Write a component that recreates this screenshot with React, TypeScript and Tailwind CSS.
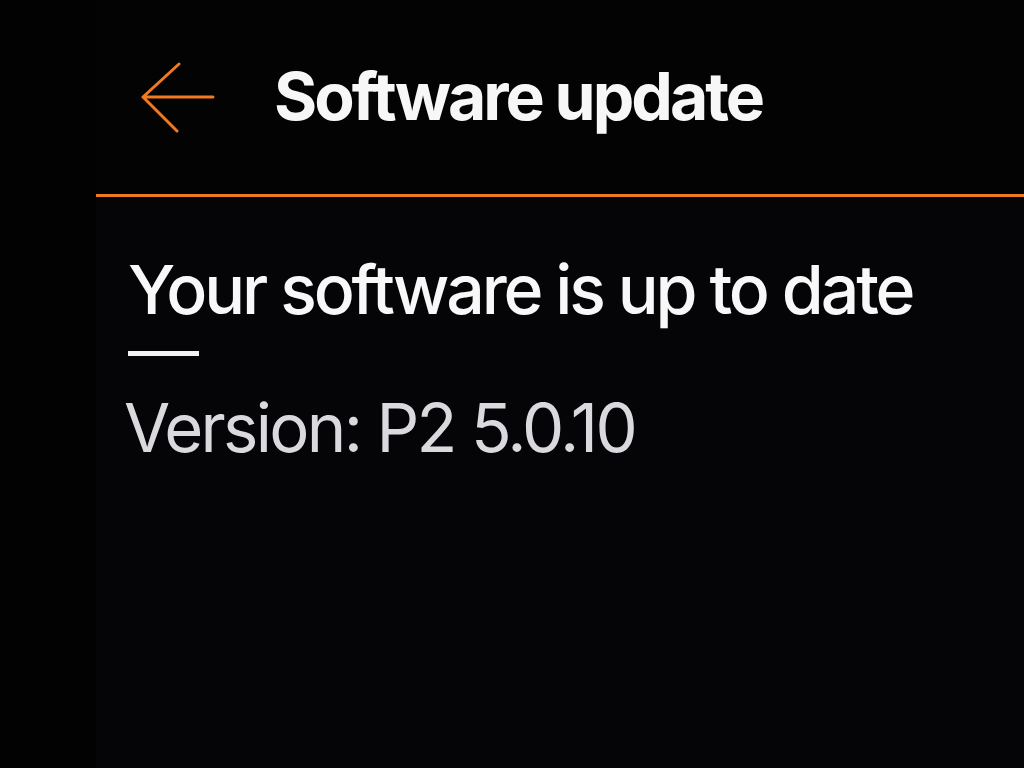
import React from "react";

export default function App() {
  return (
    <div
      className="w-[1024px] h-[768px] bg-[#020202] flex overflow-hidden"
      style={{ fontFamily: "Inter, 'Noto Sans', sans-serif" }}
    >
      <div className="w-[96px] shrink-0" />
      <div className="flex-1 bg-[#050507] flex flex-col">
        <div className="h-[194px] flex items-center bg-[#030303]">
          <div className="w-[45px] shrink-0" />
          <svg width="74" height="72" viewBox="0 0 74 72" className="shrink-0 mt-[2px]">
            <path
              d="M72 35 H2 M38 2 L2 35 L36 69"
              fill="none"
              stroke="#f27a1e"
              strokeWidth="3"
              strokeLinecap="round"
              strokeLinejoin="round"
            />
          </svg>
          <div className="w-[59px] shrink-0" />
          <h1 className="text-[66px] font-bold text-[#f7f7f7] tracking-[-0.045em] leading-none pb-[2px]">
            Software update
          </h1>
        </div>
        <div className="h-[3px] bg-[#f07a22]" />
        <div className="pl-[32px] pt-[52px] flex flex-col">
          <div className="text-[68px] font-medium text-[#f8f8f8] tracking-[-0.046em] leading-[80px]">
            Your software is up to date
          </div>
          <div className="w-[71px] h-[5px] bg-[#f2f2f2] mt-[22px]" />
          <div className="text-[67px] font-normal text-[#d9d9de] tracking-[-0.04em] leading-[80px] mt-[32px] -ml-[4px]">
            Version: P2 5.0.10
          </div>
        </div>
      </div>
    </div>
  );
}
